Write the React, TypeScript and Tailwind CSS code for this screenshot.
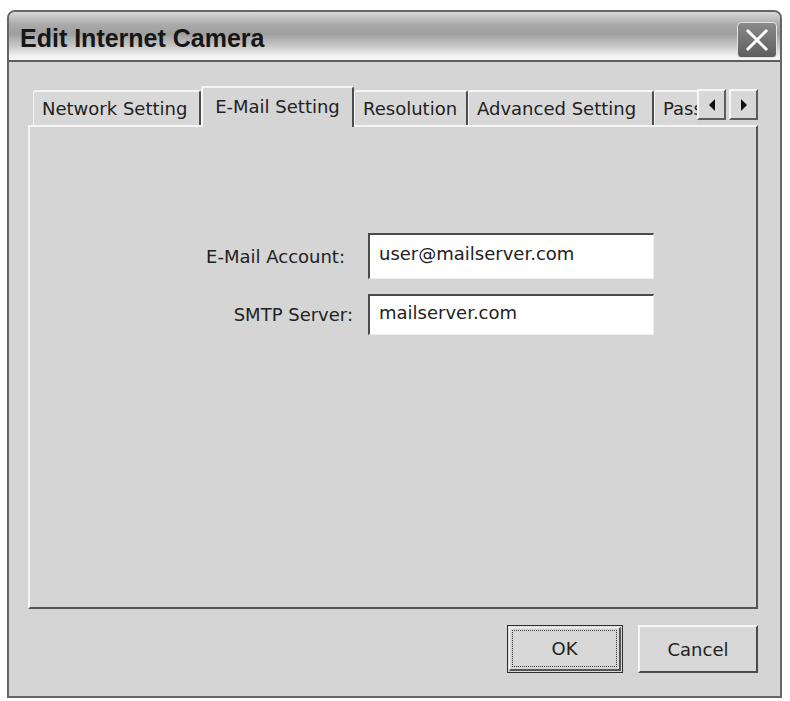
import React from 'react'

const tabs = [
  { label: 'Network Setting', w: 'w-[168px]' },
  { label: 'E-Mail Setting', w: 'w-[153px]', active: true },
  { label: 'Resolution', w: 'w-[114px]' },
  { label: 'Advanced Setting', w: 'w-[186px]' },
  { label: 'Password', w: 'w-[120px]' },
]

const Arrow: React.FC<{ dir: 'left' | 'right' }> = ({ dir }) => (
  <div className="w-[29px] h-[31px] flex items-center justify-center bg-[#d8d8d8] border-t-2 border-l-2 border-[#f6f6f6] border-r-2 border-b-2 border-r-[#5c5c5c] border-b-[#5c5c5c]">
    <svg width="8" height="12" viewBox="0 0 8 12">
      {dir === 'left' ? <path d="M7 0 L1 6 L7 12 Z" fill="#111" /> : <path d="M1 0 L7 6 L1 12 Z" fill="#111" />}
    </svg>
  </div>
)

export default function App() {
  return (
    <div className="min-h-screen bg-white pt-[10px] pl-[7px] font-['DejaVu_Sans',sans-serif] text-[18px] text-[#222]">
      <div className="w-[775px] h-[688px] flex flex-col border-2 border-[#666] rounded-t-[8px] bg-[#d5d5d5] overflow-hidden">
        {/* Title bar */}
        <div className="h-[50px] shrink-0 flex border-b-2 border-[#5e5e5e] bg-[linear-gradient(to_bottom,#d8d8d8_0%,#ababab_25%,#9e9e9e_45%,#c6c6c6_70%,#f6f6f6_94%)]">
          <div className="flex-1 pl-[11px] pt-[12px] font-['Liberation_Sans',Arial,sans-serif] font-bold text-[25px] leading-[28px] text-[#161616]">
            Edit Internet Camera
          </div>
          <div className="mt-[10px] mr-[3px] w-[40px] h-[36px] rounded-[4px] border border-[#e4e4e4] bg-[linear-gradient(to_bottom,#8a8a8a,#5e5e5e)] flex items-center justify-center">
            <svg width="24" height="24" viewBox="0 0 24 24">
              <path d="M3 3 L21 21 M21 3 L3 21" stroke="#fff" strokeWidth="3" strokeLinecap="square" />
            </svg>
          </div>
        </div>

        {/* Client */}
        <div className="flex-1 flex flex-col pl-[19px] pr-[22px] pt-[24px]">
          {/* Tab strip */}
          <div className="h-[39px] flex items-start relative z-10">
            <div className="flex-1 min-w-0 h-[41px] flex items-end overflow-hidden pl-[5px]">
              {tabs.map((t) =>
                t.active ? (
                  <div
                    key={t.label}
                    className={`${t.w} shrink-0 h-[41px] bg-[#d5d5d5] rounded-t-[3px] border-t-2 border-l-2 border-[#f6f6f6] border-r-2 border-r-[#4c4c4c] flex items-center justify-center pb-[3px] whitespace-nowrap`}
                  >
                    {t.label}
                  </div>
                ) : (
                  <div
                    key={t.label}
                    className={`${t.w} shrink-0 h-[35px] mb-[2px] bg-[#d8d8d8] rounded-t-[3px] border-t-2 border-l border-[#f6f6f6] border-r-2 border-r-[#4c4c4c] flex items-center pl-[8px] whitespace-nowrap`}
                  >
                    {t.label}
                  </div>
                )
              )}
            </div>
            <div className="flex gap-[3px] pt-[3px]">
              <Arrow dir="left" />
              <Arrow dir="right" />
            </div>
          </div>

          {/* Panel */}
          <div className="h-[484px] shrink-0 bg-[#d5d5d5] border-t-2 border-l-2 border-[#f6f6f6] border-r-2 border-b-2 border-r-[#555] border-b-[#555] flex flex-col pt-[106px] pl-[152px] gap-[15px]">
            <div className="flex items-center">
              <div className="w-[186px] text-right pr-[23px] whitespace-nowrap">E-Mail Account:</div>
              <div className="w-[286px] h-[46px] bg-white border-t-2 border-l-2 border-[#4a4a4a] border-r border-b border-r-[#ececec] border-b-[#ececec] flex items-center pl-[9px] pb-[6px]">
                user@mailserver.com
              </div>
            </div>
            <div className="flex items-center">
              <div className="w-[186px] text-right pr-[15px] whitespace-nowrap">SMTP Server:</div>
              <div className="w-[286px] h-[41px] bg-white border-t-2 border-l-2 border-[#4a4a4a] border-r border-b border-r-[#ececec] border-b-[#ececec] flex items-center pl-[9px] pb-[6px]">
                mailserver.com
              </div>
            </div>
          </div>

          {/* Buttons */}
          <div className="flex justify-end gap-[15px] mt-[16px]">
            <button className="w-[116px] h-[48px] bg-[#d8d8d8] border border-[#2e2e2e] p-[1px]">
              <div className="w-full h-full border-t border-l border-[#f6f6f6] border-r-2 border-b-2 border-r-[#555] border-b-[#555] p-[2px]">
                <div className="w-full h-full border border-dotted border-[#333] flex items-center justify-center">OK</div>
              </div>
            </button>
            <button className="w-[120px] h-[48px] bg-[#d8d8d8] border-t-2 border-l-2 border-[#f6f6f6] border-r-2 border-b-2 border-r-[#4a4a4a] border-b-[#4a4a4a] flex items-center justify-center">
              Cancel
            </button>
          </div>
        </div>
      </div>
    </div>
  )
}
